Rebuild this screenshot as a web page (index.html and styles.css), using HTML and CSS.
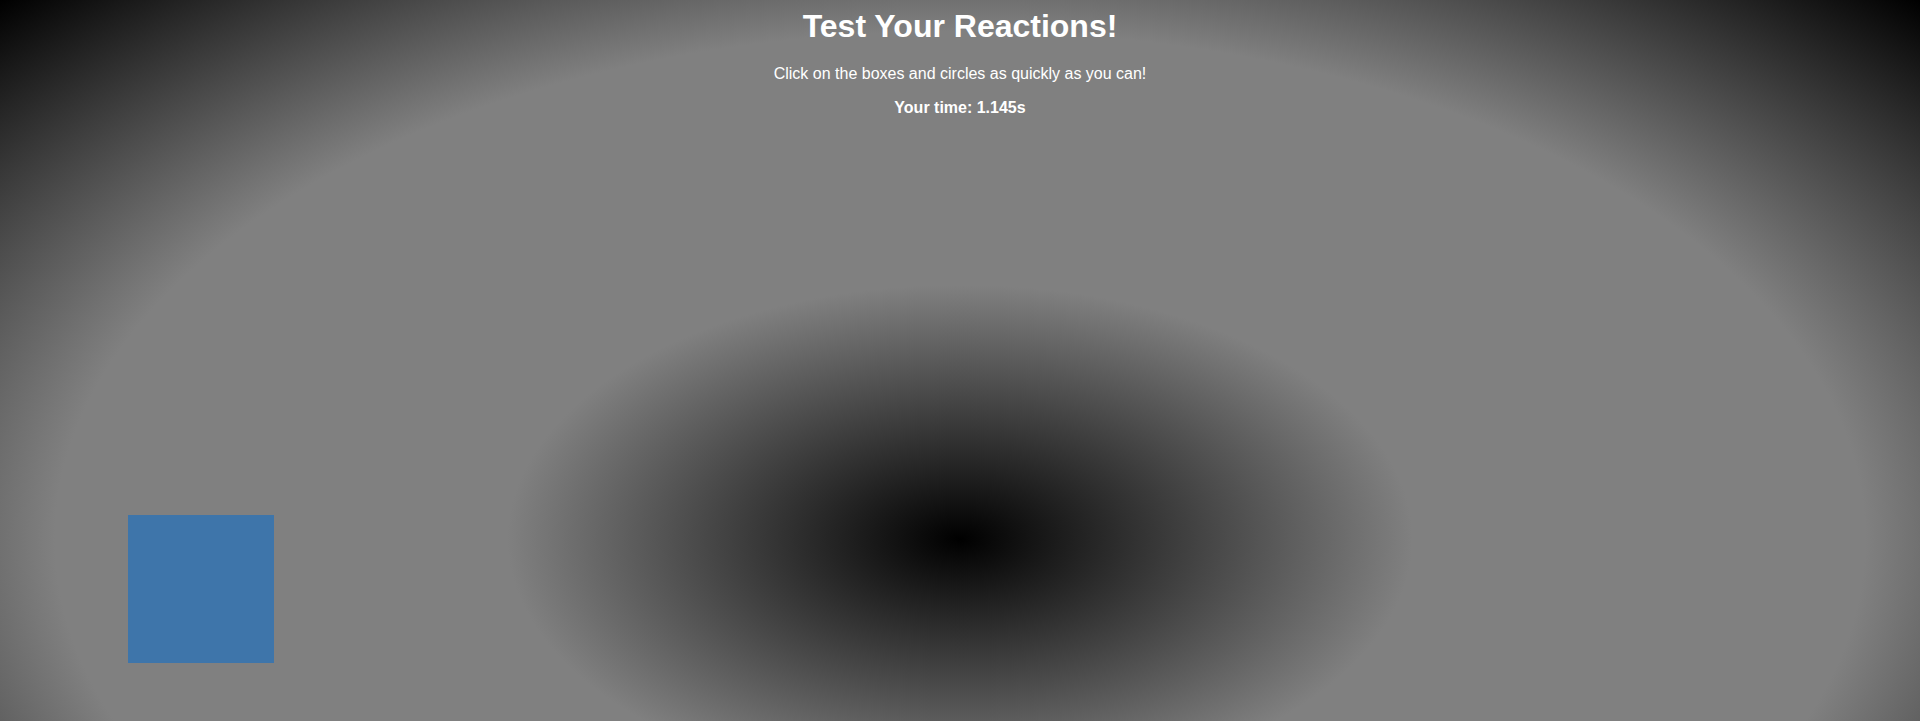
FILE: index.html
```html
<!DOCTYPE html>
<html lang="en">
<head>
<meta charset="utf-8">
<title>Test Your Reactions!</title>
<link rel="stylesheet" href="styles.css">
</head>
<body>
<main class="stage">
  <header class="intro">
    <h1 class="title">Test Your Reactions!</h1>
    <p class="hint">Click on the boxes and circles as quickly as you can!</p>
    <p class="result">Your time: 1.145s</p>
  </header>
  <div class="target"></div>
</main>
</body>
</html>
```

FILE: styles.css
```css
html, body {
  margin: 0;
  padding: 0;
}

body {
  font-family: "Liberation Sans", Arial, sans-serif;
  color: #ffffff;
  background: #000;
  overflow: hidden;
}

.stage {
  position: relative;
  height: 1078px;
  background: radial-gradient(#000000, #808080, #808080, #000000);
  padding-top: 8px;
  box-sizing: border-box;
}

.intro {
  display: flex;
  flex-direction: column;
  align-items: center;
  text-align: center;
}

.title {
  margin: 0;
  font-size: 32px;
  font-weight: bold;
  line-height: 37px;
}

.hint {
  margin: 20px 0 0;
  font-size: 16px;
  line-height: 18px;
}

.result {
  margin: 16px 0 0;
  font-size: 16px;
  line-height: 18px;
  font-weight: bold;
}

.target {
  position: absolute;
  left: 128px;
  top: 515px;
  width: 146px;
  height: 148px;
  background: #3e75aa;
}
```
